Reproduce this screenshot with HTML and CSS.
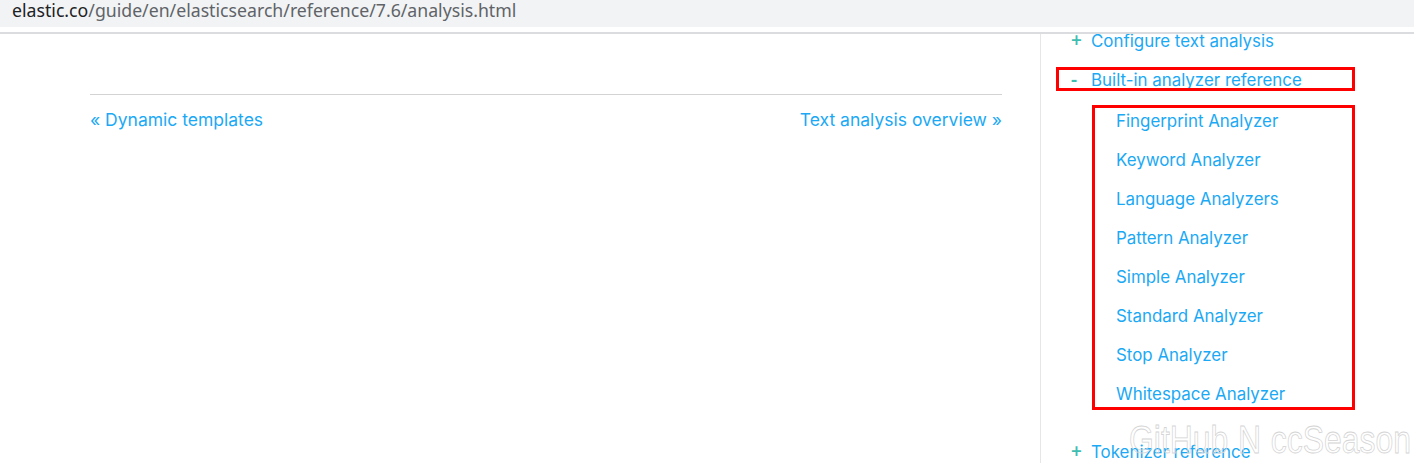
FILE: index.html
```html
<!DOCTYPE html>
<html>
<head>
<meta charset="utf-8">
<link rel="stylesheet" href="styles.css">
</head>
<body>
<div class="urlbar"><span class="host">elastic.co</span><span class="path">/guide/en/elasticsearch/reference/7.6/analysis.html</span></div>
<div class="urlline"></div>
<div class="page">
  <main class="content">
    <hr class="rule">
    <div class="navlinks">
      <a class="link">« Dynamic templates</a>
      <a class="link">Text analysis overview »</a>
    </div>
  </main>
  <aside class="sidebar">
    <ul class="toc">
      <li class="item"><span class="mark">+</span><a class="link">Configure text analysis</a></li>
      <li class="item open"><span class="mark">-</span><a class="link">Built-in analyzer reference</a>
        <ul class="sub">
          <li class="subitem"><a class="link">Fingerprint Analyzer</a></li>
          <li class="subitem"><a class="link">Keyword Analyzer</a></li>
          <li class="subitem"><a class="link">Language Analyzers</a></li>
          <li class="subitem"><a class="link">Pattern Analyzer</a></li>
          <li class="subitem"><a class="link">Simple Analyzer</a></li>
          <li class="subitem"><a class="link">Standard Analyzer</a></li>
          <li class="subitem"><a class="link">Stop Analyzer</a></li>
          <li class="subitem"><a class="link">Whitespace Analyzer</a></li>
        </ul>
      </li>
      <li class="item"><span class="mark">+</span><a class="link">Tokenizer reference</a></li>
    </ul>
    <div class="box box-head"></div>
    <div class="box box-sub"></div>
  </aside>
</div>
<div class="watermark">GitHub N ccSeason</div>
</body>
</html>
```

FILE: styles.css
```css
html, body {
  margin: 0;
  padding: 0;
  background: #fff;
  overflow: hidden;
}
body {
  width: 1414px;
  height: 463px;
  position: relative;
  font-family: Inter, "Noto Sans", sans-serif;
}
.urlbar {
  height: 27px;
  background: #f1f3f4;
  padding-left: 12px;
  font-family: "Noto Sans", "Liberation Sans", sans-serif;
  font-size: 17.7px;
  line-height: 21px;
  box-sizing: border-box;
}
.host { color: #202124; }
.path { color: #5f6368; }
.urlline {
  margin-top: 5px;
  height: 2px;
  background: #dadce0;
}
.page {
  display: flex;
  height: 429px;
}
.content {
  width: 912px;
  padding-left: 90px;
  padding-right: 38px;
  padding-top: 60px;
}
.rule {
  margin: 0;
  border: 0;
  border-top: 1px solid #d3d3d3;
}
.navlinks {
  display: flex;
  justify-content: space-between;
  margin-top: 13px;
  font-size: 17.5px;
  line-height: 24px;
}
.link {
  color: #1ba9f5;
  text-decoration: none;
}
.sidebar {
  position: relative;
  flex: 1;
  border-left: 1px solid #e6e6e6;
  overflow: hidden;
}
.toc {
  list-style: none;
  margin: -12.5px 0 0 0;
  padding: 0 0 0 30px;
  font-size: 16.9px;
}
.item {
  line-height: 39px;
}
.mark {
  display: inline-block;
  width: 20px;
  color: #3ebeb0;
  font-family: "Noto Sans", sans-serif;
  font-size: 19px;
  font-weight: 600;
  line-height: 1;
}
.sub {
  list-style: none;
  margin: 2px 0 19px 0;
  padding: 0 0 0 45px;
}
.subitem {
  line-height: 39px;
}
.box {
  position: absolute;
  border: 3px solid #ff0000;
  box-sizing: border-box;
}
.box-head {
  left: 15px;
  top: 33px;
  width: 299px;
  height: 24px;
}
.box-sub {
  left: 51px;
  top: 71px;
  width: 263px;
  height: 305px;
}
.watermark {
  position: absolute;
  left: 1129px;
  top: 418px;
  font-family: "Liberation Sans", Arial, sans-serif;
  font-size: 38px;
  line-height: 44px;
  white-space: nowrap;
  color: transparent;
  -webkit-text-stroke: 0.8px #d4d4d4;
  word-spacing: 1px;
  transform: scaleX(0.84);
  transform-origin: left top;
}
```
